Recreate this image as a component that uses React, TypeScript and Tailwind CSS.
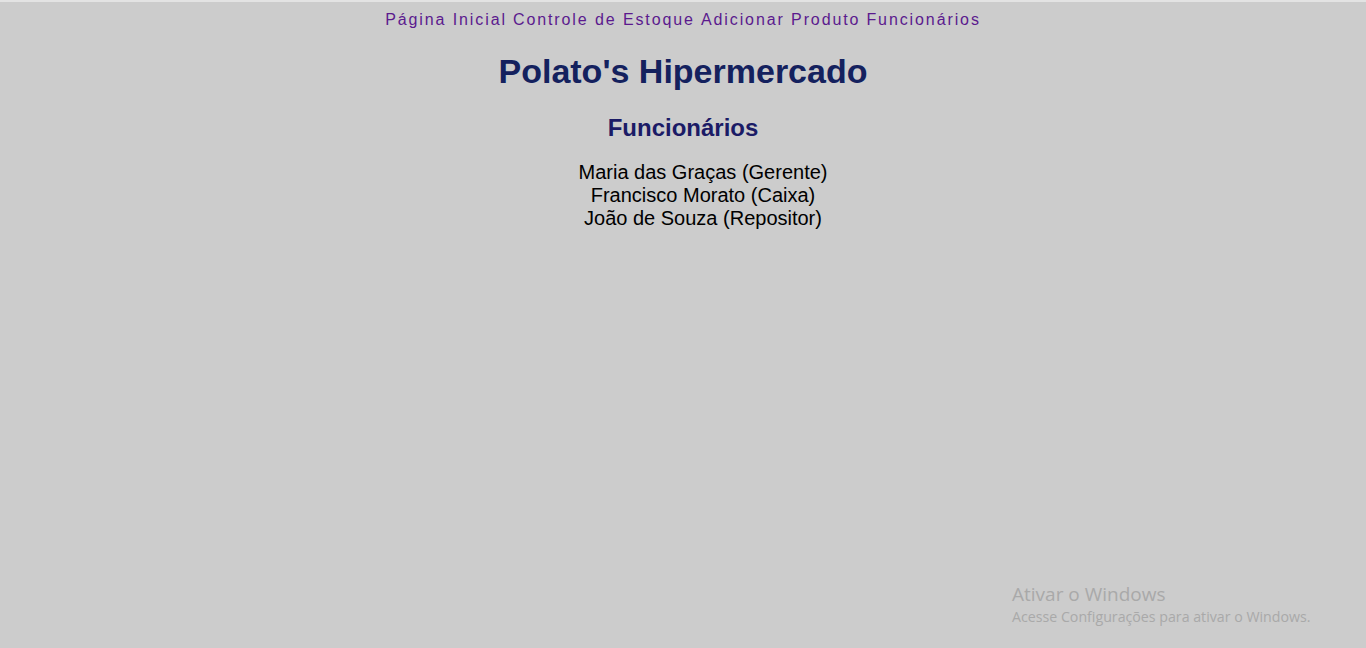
import React from 'react';

const links = ["Página Inicial", "Controle de Estoque", "Adicionar Produto", "Funcionários"];

const funcionarios = [
  "Maria das Graças (Gerente)",
  "Francisco Morato (Caixa)",
  "João de Souza (Repositor)",
];

export default function App() {
  return (
    <div className="relative min-h-[648px] bg-[#cccccc] border-t-2 border-[#e3e3e3] font-['Liberation_Sans',Arial,sans-serif] overflow-hidden">
      <nav className="flex justify-center gap-[6px] pt-[9px] text-[16px] leading-[18px] tracking-[1.9px] text-[#5b1a8e]">
        {links.map((l) => (
          <a key={l} href="#">{l}</a>
        ))}
      </nav>
      <h1 className="mt-[23px] text-center text-[34px] font-bold leading-[39px] text-[#14215e]">
        Polato's Hipermercado
      </h1>
      <h2 className="mt-[23px] text-center text-[24px] font-bold leading-[28px] text-[#1b1b66]">
        Funcionários
      </h2>
      <ul className="mt-[19px] pl-[40px] text-center text-[20px] leading-[23px] text-black">
        {funcionarios.map((f) => (
          <li key={f}>{f}</li>
        ))}
      </ul>
      <div className="absolute left-[1012px] top-[579px] font-['Open_Sans',sans-serif] text-[#a9a9a9]">
        <div className="text-[19px] leading-[26px]">Ativar o Windows</div>
        <div className="text-[14.2px] leading-[20px]">Acesse Configurações para ativar o Windows.</div>
      </div>
    </div>
  );
}
